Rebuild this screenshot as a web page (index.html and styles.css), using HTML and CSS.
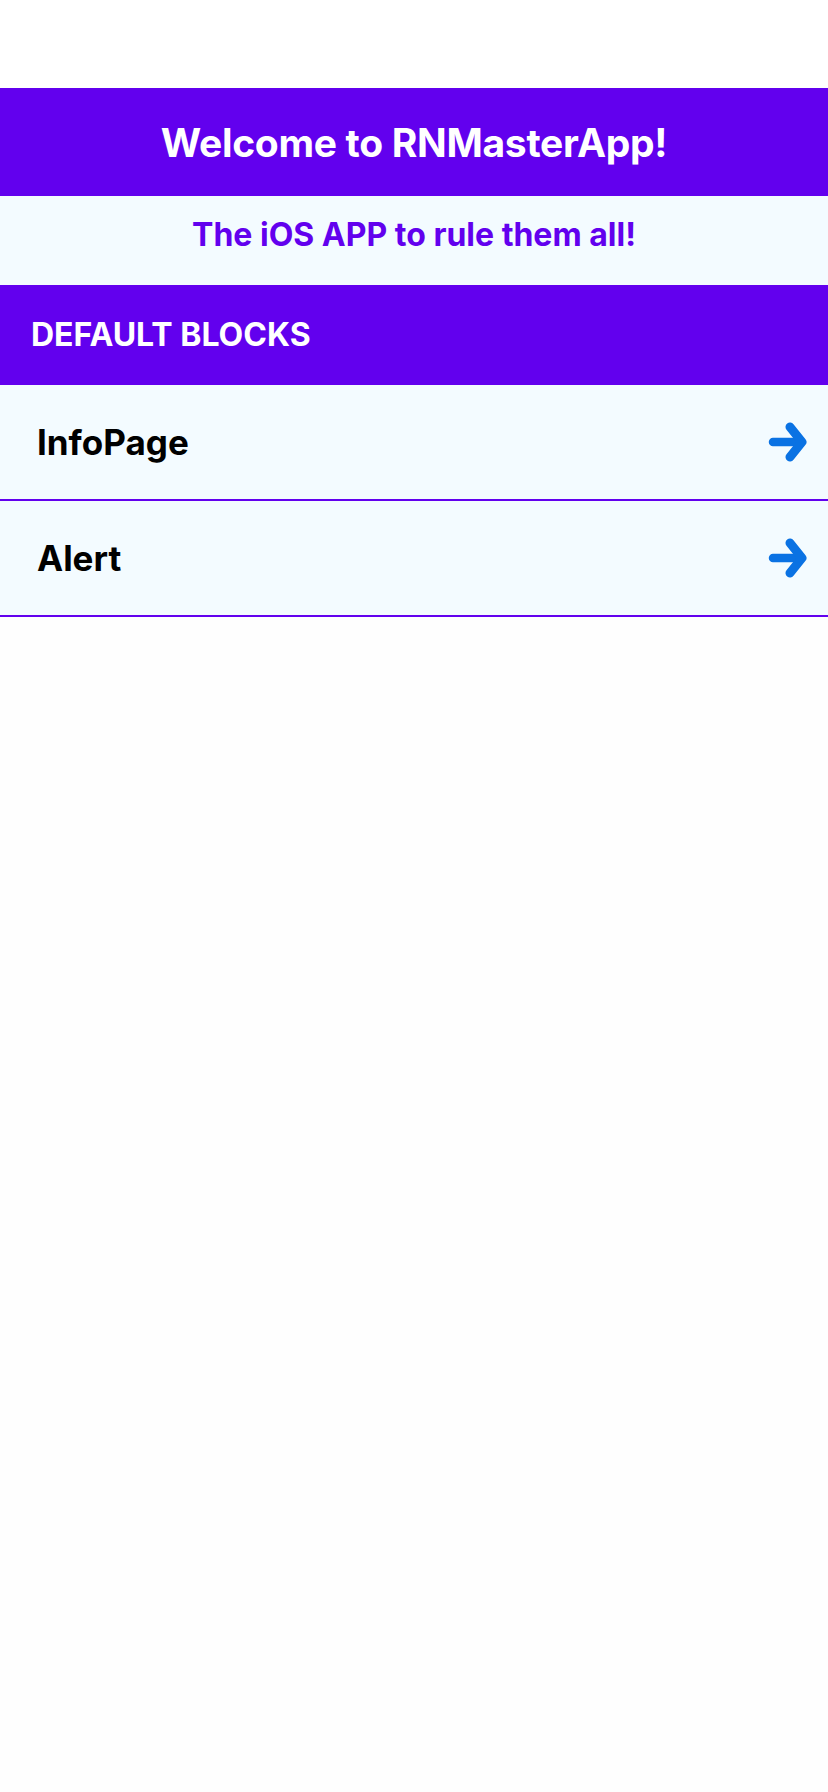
FILE: index.html
```html
<!DOCTYPE html>
<html>
<head>
<meta charset="utf-8">
<link rel="stylesheet" href="styles.css">
</head>
<body>
<div class="screen">
  <div class="status"></div>
  <header class="title-bar"><h1 class="title">Welcome to RNMasterApp!</h1></header>
  <div class="subtitle-band"><p class="subtitle">The iOS APP to rule them all!</p></div>
  <div class="section-header"><span class="section-title">DEFAULT BLOCKS</span></div>
  <ul class="list">
    <li class="row">
      <span class="row-label">InfoPage</span>
      <svg class="arrow" viewBox="0 0 40 40" width="40" height="40"><line x1="5" y1="20" x2="33" y2="20" stroke="#0a72e3" stroke-width="8.5" stroke-linecap="round"/><polyline points="22,5 34,20 22,35" fill="none" stroke="#0a72e3" stroke-width="9" stroke-linecap="round" stroke-linejoin="round"/></svg>
    </li>
    <li class="row">
      <span class="row-label">Alert</span>
      <svg class="arrow" viewBox="0 0 40 40" width="40" height="40"><line x1="5" y1="20" x2="33" y2="20" stroke="#0a72e3" stroke-width="8.5" stroke-linecap="round"/><polyline points="22,5 34,20 22,35" fill="none" stroke="#0a72e3" stroke-width="9" stroke-linecap="round" stroke-linejoin="round"/></svg>
    </li>
  </ul>
</div>
</body>
</html>
```

FILE: styles.css
```css
html, body {
  margin: 0;
  padding: 0;
  background: #fefefe;
}
.screen {
  width: 828px;
  min-height: 1792px;
  font-family: "Inter", "Noto Sans", sans-serif;
  background: #fefefe;
}
.status {
  height: 88px;
  background: #ffffff;
}
.title-bar {
  height: 108px;
  background: #6200ee;
  display: flex;
  align-items: center;
  justify-content: center;
}
.title {
  margin: 0;
  color: #ffffff;
  font-size: 39px;
  font-weight: 700;
  letter-spacing: -0.3px;
  line-height: 1;
}
.subtitle-band {
  height: 89px;
  box-sizing: border-box;
  padding-bottom: 11px;
  background: #f3fbff;
  display: flex;
  align-items: center;
  justify-content: center;
}
.subtitle {
  margin: 0;
  color: #6200ee;
  font-size: 32px;
  font-weight: 700;
  letter-spacing: 0;
  line-height: 1;
}
.section-header {
  height: 100px;
  background: #6200ee;
  display: flex;
  align-items: center;
  padding-left: 31px;
}
.section-title {
  color: #ffffff;
  font-size: 32px;
  font-weight: 700;
  line-height: 1;
}
.list {
  list-style: none;
  margin: 0;
  padding: 0;
}
.row {
  height: 116px;
  box-sizing: border-box;
  background: #f3fbff;
  border-bottom: 2px solid #6200ee;
  display: flex;
  align-items: center;
  justify-content: space-between;
  padding: 0 20px 0 37px;
}
.row-label {
  color: #000000;
  font-size: 35px;
  font-weight: 700;
  line-height: 1;
}
.arrow {
  display: block;
}
```
